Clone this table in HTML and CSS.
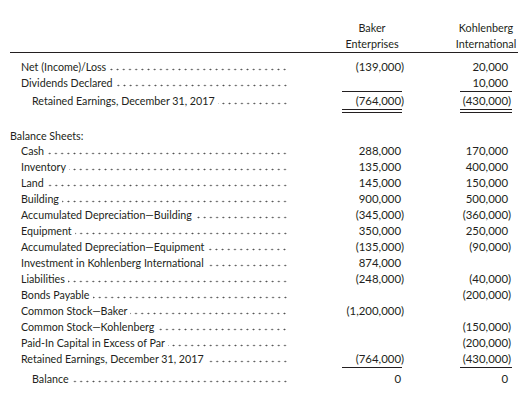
FILE: index.html
```html
<!DOCTYPE html>
<html>
<head>
<meta charset="utf-8">
<link rel="stylesheet" href="styles.css">
</head>
<body>
<div class="sheet">
  <div class="head">
    <div class="row hrow">
      <div class="b hc">Baker</div>
      <div class="k hc">Kohlenberg</div>
    </div>
    <div class="row hrow">
      <div class="b hc">Enterprises</div>
      <div class="k hc">International</div>
    </div>
  </div>

  <div class="sec1">
    <div class="row"><div class="lab i1"><span>Net (Income)/Loss</span><i class="dots"></i></div><div class="b num">(139,000<span class="rp">)</span></div><div class="k num">20,000</div></div>
    <div class="row"><div class="lab i1"><span>Dividends Declared</span><i class="dots"></i></div><div class="b num ul"></div><div class="k num ul">10,000</div></div>
    <div class="row tot"><div class="lab i2"><span>Retained Earnings, December 31, 2017</span><i class="dots"></i></div><div class="b num dul">(764,000<span class="rp">)</span></div><div class="k num dul">(430,000<span class="rp">)</span></div></div>
  </div>

  <div class="sec2">
    <div class="row"><div class="lab i0"><span>Balance Sheets:</span></div></div>
    <div class="row"><div class="lab i1"><span>Cash</span><i class="dots"></i></div><div class="b num">288,000</div><div class="k num">170,000</div></div>
    <div class="row"><div class="lab i1"><span>Inventory</span><i class="dots"></i></div><div class="b num">135,000</div><div class="k num">400,000</div></div>
    <div class="row"><div class="lab i1"><span>Land</span><i class="dots"></i></div><div class="b num">145,000</div><div class="k num">150,000</div></div>
    <div class="row"><div class="lab i1"><span>Building</span><i class="dots"></i></div><div class="b num">900,000</div><div class="k num">500,000</div></div>
    <div class="row"><div class="lab i1"><span>Accumulated Depreciation—Building</span><i class="dots"></i></div><div class="b num">(345,000<span class="rp">)</span></div><div class="k num">(360,000<span class="rp">)</span></div></div>
    <div class="row"><div class="lab i1"><span>Equipment</span><i class="dots"></i></div><div class="b num">350,000</div><div class="k num">250,000</div></div>
    <div class="row"><div class="lab i1"><span>Accumulated Depreciation—Equipment</span><i class="dots"></i></div><div class="b num">(135,000<span class="rp">)</span></div><div class="k num">(90,000<span class="rp">)</span></div></div>
    <div class="row"><div class="lab i1"><span>Investment in Kohlenberg International</span><i class="dots"></i></div><div class="b num">874,000</div></div>
    <div class="row"><div class="lab i1"><span>Liabilities</span><i class="dots"></i></div><div class="b num">(248,000<span class="rp">)</span></div><div class="k num">(40,000<span class="rp">)</span></div></div>
    <div class="row"><div class="lab i1"><span>Bonds Payable</span><i class="dots"></i></div><div class="k num">(200,000<span class="rp">)</span></div></div>
    <div class="row"><div class="lab i1"><span>Common Stock—Baker</span><i class="dots"></i></div><div class="b num">(1,200,000<span class="rp">)</span></div></div>
    <div class="row"><div class="lab i1"><span>Common Stock—Kohlenberg</span><i class="dots"></i></div><div class="k num">(150,000<span class="rp">)</span></div></div>
    <div class="row"><div class="lab i1"><span>Paid-In Capital in Excess of Par</span><i class="dots"></i></div><div class="k num">(200,000<span class="rp">)</span></div></div>
    <div class="row"><div class="lab i1"><span>Retained Earnings, December 31, 2017</span><i class="dots"></i></div><div class="b num ul">(764,000<span class="rp">)</span></div><div class="k num ul">(430,000<span class="rp">)</span></div></div>
    <div class="row tot"><div class="lab i2"><span>Balance</span><i class="dots"></i></div><div class="b num dul">0</div><div class="k num dul">0</div></div>
  </div>
</div>
</body>
</html>
```

FILE: styles.css
```css
html, body {
  margin: 0;
  padding: 0;
  background: #ffffff;
}

body {
  font-family: Lato, "Liberation Sans", sans-serif;
  font-size: 10.7px;
  color: #231f20;
}

.sheet {
  padding-top: 20px;
  width: 518px;
}

.head {
  margin-left: 10px;
  border-bottom: 1px solid #231f20;
}

.row {
  display: grid;
  grid-template-columns: 342px 60px 58px 52px;
  height: 16px;
  line-height: 16px;
}

.head .row {
  grid-template-columns: 332px 60px 58px 52px;
}

.hc {
  white-space: nowrap;
  display: flex;
  justify-content: center;
  font-size: 10.8px;
}

.b { grid-column: 2; }
.k { grid-column: 4; }

.lab {
  grid-column: 1;
  display: flex;
  align-items: baseline;
  padding-right: 54px;
  white-space: nowrap;
}

.lab span {
  padding-right: 3px;
}

.i0 { padding-left: 10px; }
.i1 { padding-left: 21px; }
.i2 { padding-left: 32px; }

.dots {
  flex: 1;
  height: 4px;
  background-image: radial-gradient(circle, #505050 0.7px, transparent 1.1px);
  background-size: 6.2px 3px;
  background-position: right bottom;
  background-repeat: repeat-x;
}

.num {
  display: flex;
  justify-content: flex-end;
  white-space: nowrap;
  padding-right: 1px;
  font-size: 11.4px;
}

.k.num {
  padding-right: 4px;
}

.rp {
  display: inline-block;
  width: 0;
}

.ul {
  border-bottom: 1px solid #231f20;
  height: 16px;
}

.dul {
  border-bottom: 4px double #231f20;
  height: 16px;
}

.sec1 {
  margin-top: 6px;
}

.sec1 .tot {
  margin-top: 2px;
}

.sec2 {
  margin-top: 19px;
}

.sec2 .row:first-child {
  margin-bottom: -1px;
}

.sec2 .tot {
  margin-top: 4px;
}
```
